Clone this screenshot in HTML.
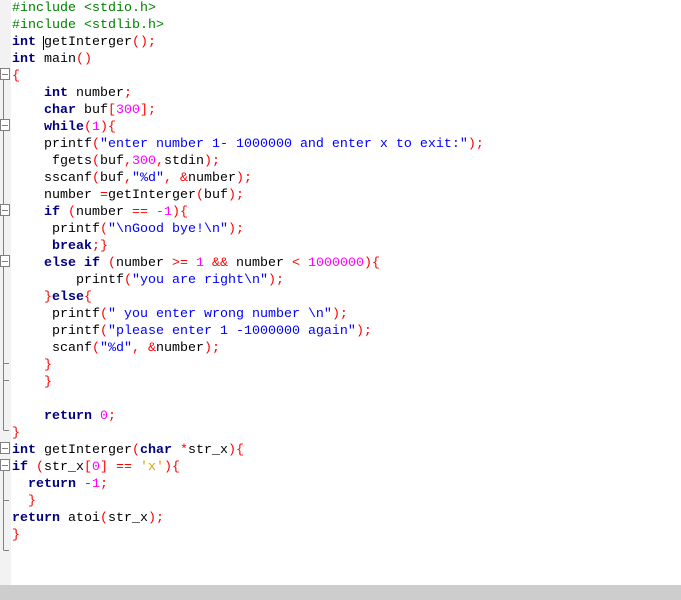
<!DOCTYPE html>
<html><head><meta charset="utf-8"><style>
body{margin:0;width:681px;height:600px;background:#fff;overflow:hidden;position:relative;font-family:"Liberation Mono",monospace;font-size:13.33px}
.g{position:absolute;left:0;top:0;width:11px;height:585px;background:#f2f2f2}
.bar{position:absolute;left:0;top:585px;width:681px;height:15px;background:#cdcdcd}
.l{position:absolute;left:12px;height:17px;line-height:17px;white-space:pre;color:#000}
.k{color:#000080;font-weight:bold}.p{color:#ff0000}.s{color:#0000ff}.n{color:#ff00ff}.c{color:#008000}.o{color:#e0a000}
svg{position:absolute;left:0;top:0}
</style></head><body>
<div class="g"></div><div class="bar"></div>
<svg width="12" height="585" stroke="#808080" fill="#fff" stroke-width="1">
<line x1="3.5" y1="80" x2="3.5" y2="430"/>
<line x1="3.5" y1="363.5" x2="9" y2="363.5"/>
<line x1="3.5" y1="380.5" x2="9" y2="380.5"/>
<line x1="3.5" y1="430.5" x2="9" y2="430.5"/>
<line x1="3.5" y1="460" x2="3.5" y2="550"/>
<line x1="3.5" y1="500.5" x2="9" y2="500.5"/>
<line x1="3.5" y1="550.5" x2="9" y2="550.5"/>
<g>
<rect x="0.5" y="68.5" width="9" height="11"/><line x1="2" y1="74.5" x2="8" y2="74.5"/>
<rect x="0.5" y="119.5" width="9" height="11"/><line x1="2" y1="125.5" x2="8" y2="125.5"/>
<rect x="0.5" y="204.5" width="9" height="11"/><line x1="2" y1="210.5" x2="8" y2="210.5"/>
<rect x="0.5" y="255.5" width="9" height="11"/><line x1="2" y1="261.5" x2="8" y2="261.5"/>
<rect x="0.5" y="442.5" width="9" height="11"/><line x1="2" y1="448.5" x2="8" y2="448.5"/>
<rect x="0.5" y="459.5" width="9" height="11"/><line x1="2" y1="465.5" x2="8" y2="465.5"/>
</g></svg>
<div class="l c" style="top:0">#include &lt;stdio.h&gt;</div>
<div class="l c" style="top:17px">#include &lt;stdlib.h&gt;</div>
<div class="l" style="top:34px"><span class="k">int</span> getInterger<span class="p">();</span></div>
<div style="position:absolute;left:43px;top:36px;width:1px;height:14px;background:#000"></div>
<div class="l" style="top:51px"><span class="k">int</span> main<span class="p">()</span></div>
<div class="l" style="top:68px"><span class="p">{</span></div>
<div class="l" style="top:85px">    <span class="k">int</span> number<span class="p">;</span></div>
<div class="l" style="top:102px">    <span class="k">char</span> buf<span class="p">[</span><span class="n">300</span><span class="p">];</span></div>
<div class="l" style="top:119px">    <span class="k">while</span><span class="p">(</span><span class="n">1</span><span class="p">){</span></div>
<div class="l" style="top:136px">    printf<span class="p">(</span><span class="s">"enter number 1- 1000000 and enter x to exit:"</span><span class="p">);</span></div>
<div class="l" style="top:153px">     fgets<span class="p">(</span>buf<span class="p">,</span><span class="n">300</span><span class="p">,</span>stdin<span class="p">);</span></div>
<div class="l" style="top:170px">    sscanf<span class="p">(</span>buf<span class="p">,</span><span class="s">"%d"</span><span class="p">,</span> <span class="p">&amp;</span>number<span class="p">);</span></div>
<div class="l" style="top:187px">    number <span class="p">=</span>getInterger<span class="p">(</span>buf<span class="p">);</span></div>
<div class="l" style="top:204px">    <span class="k">if</span> <span class="p">(</span>number <span class="p">==</span> <span class="n">-1</span><span class="p">){</span></div>
<div class="l" style="top:221px">     printf<span class="p">(</span><span class="s">"\nGood bye!\n"</span><span class="p">);</span></div>
<div class="l" style="top:238px">     <span class="k">break</span><span class="p">;}</span></div>
<div class="l" style="top:255px">    <span class="k">else</span> <span class="k">if</span> <span class="p">(</span>number <span class="p">&gt;=</span> <span class="n">1</span> <span class="p">&amp;&amp;</span> number <span class="p">&lt;</span> <span class="n">1000000</span><span class="p">){</span></div>
<div class="l" style="top:272px">        printf<span class="p">(</span><span class="s">"you are right\n"</span><span class="p">);</span></div>
<div class="l" style="top:289px">    <span class="p">}</span><span class="k">else</span><span class="p">{</span></div>
<div class="l" style="top:306px">     printf<span class="p">(</span><span class="s">" you enter wrong number \n"</span><span class="p">);</span></div>
<div class="l" style="top:323px">     printf<span class="p">(</span><span class="s">"please enter 1 -1000000 again"</span><span class="p">);</span></div>
<div class="l" style="top:340px">     scanf<span class="p">(</span><span class="s">"%d"</span><span class="p">,</span> <span class="p">&amp;</span>number<span class="p">);</span></div>
<div class="l" style="top:357px">    <span class="p">}</span></div>
<div class="l" style="top:374px">    <span class="p">}</span></div>
<div class="l" style="top:408px">    <span class="k">return</span> <span class="n">0</span><span class="p">;</span></div>
<div class="l" style="top:425px"><span class="p">}</span></div>
<div class="l" style="top:442px"><span class="k">int</span> getInterger<span class="p">(</span><span class="k">char</span> <span class="p">*</span>str_x<span class="p">){</span></div>
<div class="l" style="top:459px"><span class="k">if</span> <span class="p">(</span>str_x<span class="p">[</span><span class="n">0</span><span class="p">]</span> <span class="p">==</span> <span class="o">'x'</span><span class="p">){</span></div>
<div class="l" style="top:476px">  <span class="k">return</span> <span class="p">-</span><span class="n">1</span><span class="p">;</span></div>
<div class="l" style="top:493px">  <span class="p">}</span></div>
<div class="l" style="top:510px"><span class="k">return</span> atoi<span class="p">(</span>str_x<span class="p">);</span></div>
<div class="l" style="top:527px"><span class="p">}</span></div>
</body></html>
